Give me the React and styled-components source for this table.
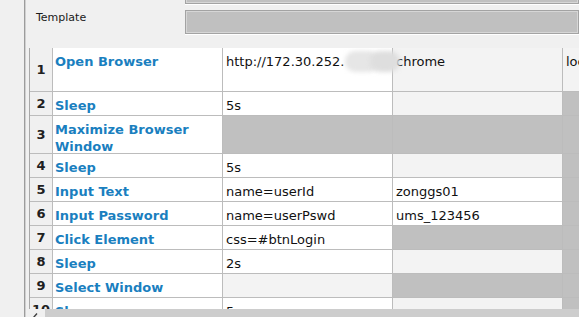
import React from 'react'
import styled, { createGlobalStyle } from 'styled-components'

const GlobalStyle = createGlobalStyle`
  html, body {
    margin: 0;
    padding: 0;
    overflow: hidden;
    background: #f0f0f0;
  }
  body {
    font-family: "DejaVu Sans", Tahoma, sans-serif;
  }
`

const WHITE = '#ffffff'
const LIGHT = '#f3f3f3'
const GREY = '#c0c0c0'

const rows = [
  { n: 1, h: 44, kw: 'Open Browser', cells: [['http://172.30.252.', WHITE], ['chrome', LIGHT], ['loc', LIGHT]] },
  { n: 2, h: 24, kw: 'Sleep', cells: [['5s', WHITE], ['', LIGHT], ['', GREY]] },
  { n: 3, h: 38, kw: 'Maximize Browser Window', cells: [['', GREY], ['', GREY], ['', GREY]] },
  { n: 4, h: 24, kw: 'Sleep', cells: [['5s', WHITE], ['', LIGHT], ['', GREY]] },
  { n: 5, h: 24, kw: 'Input Text', cells: [['name=userId', WHITE], ['zonggs01', WHITE], ['', GREY]] },
  { n: 6, h: 24, kw: 'Input Password', cells: [['name=userPswd', WHITE], ['ums_123456', WHITE], ['', GREY]] },
  { n: 7, h: 24, kw: 'Click Element', cells: [['css=#btnLogin', WHITE], ['', GREY], ['', GREY]] },
  { n: 8, h: 24, kw: 'Sleep', cells: [['2s', WHITE], ['', LIGHT], ['', GREY]] },
  { n: 9, h: 24, kw: 'Select Window', cells: [['', LIGHT], ['', GREY], ['', GREY]] },
  { n: 10, h: 24, kw: 'Sleep', cells: [['5s', WHITE], ['', LIGHT], ['', GREY]] },
]

const App = () => {
  return (
    <>
      <GlobalStyle />
      <Page>
        <LeftStrip />
        <Splitter />
        <Panel>
          <Settings>
            <SettingRow>
              <Label />
              <Field />
            </SettingRow>
            <SettingRow>
              <Label>Template</Label>
              <Field />
            </SettingRow>
          </Settings>

          <GridArea>
            <Grid>
              {rows.map(row => (
                <React.Fragment key={row.n}>
                  <NumCell h={row.h}>{row.n}</NumCell>
                  <KeywordCell h={row.h}>{row.kw}</KeywordCell>
                  {row.cells.map(([text, bg], i) => (
                    <Cell key={i} h={row.h} bg={bg}>{text}</Cell>
                  ))}
                </React.Fragment>
              ))}
            </Grid>
            {/* redaction smudge over the ip address */}
            <Blur left={319} w={34} tone="#e6e6e6" />
            <Blur left={344} w={30} tone="#dedede" />
          </GridArea>

          <HScroll>
            <ScrollButton>
              <svg width="7" height="9" viewBox="0 0 7 9">
                <path d="M5 0.5 L1.5 4.5 L5 8.5" fill="none" stroke="#404040" strokeWidth="1.4" />
              </svg>
            </ScrollButton>
            <ScrollThumb />
          </HScroll>
        </Panel>
      </Page>
    </>
  )
}

const Page = styled.div`
    width: 579px;
    height: 326px;
    display: flex;
    overflow: hidden;
    background: #f0f0f0;
`;

const LeftStrip = styled.div`
    width: 24px;
    flex-shrink: 0;
    background: #f0f0f0;
`;

const Splitter = styled.div`
    width: 2px;
    flex-shrink: 0;
    background: #9c9c9c;
    border-right: 1px solid #d0d0d0;
    box-sizing: border-box;
`;

const Panel = styled.div`
    flex: 1;
    min-width: 0;
    display: flex;
    flex-direction: column;
`;

const Settings = styled.div`
    height: 48px;
    flex-shrink: 0;
    display: flex;
    flex-direction: column;
    justify-content: flex-end;
    gap: 6px;
    padding: 0 0 14px 10px;
    box-sizing: border-box;
    overflow: hidden;
`;

const SettingRow = styled.div`
    display: flex;
    flex-shrink: 0;
`;

const Label = styled.div`
    width: 149px;
    flex-shrink: 0;
    font-size: 11px;
    line-height: 13px;
    padding-top: 1px;
    color: #1a1a1a;
`;

const Field = styled.div`
    flex: 1;
    height: 24px;
    box-sizing: border-box;
    background: #c0c0c0;
    border: 1px solid #a3a3a3;
    box-shadow: inset 0 0 0 1px #d6d6d6, 0 1px 0 #ffffff;
`;

const GridArea = styled.div`
    position: relative;
    flex: 1;
    min-height: 0;
    overflow: hidden;
    padding-left: 3px;
`;

const Grid = styled.div`
    display: grid;
    grid-template-columns: 23px repeat(4, 170px);
    width: max-content;
    border-top: 1px solid #bcbcbc;
    border-left: 1px solid #a8a8a8;
    margin-top: -1px;
`;

const BaseCell = styled.div`
    height: ${props => props.h}px;
    box-sizing: border-box;
    border-right: 1px solid #bcbcbc;
    border-bottom: 1px solid #bcbcbc;
    overflow: hidden;
`;

const NumCell = styled(BaseCell)`
    background: #f0f0f0;
    display: flex;
    align-items: center;
    justify-content: center;
    font-weight: bold;
    font-size: 13px;
    color: #202020;
`;

const KeywordCell = styled(BaseCell)`
    background: #ffffff;
    padding: 5px 2px 0;
    font-weight: bold;
    font-size: 13px;
    line-height: 17px;
    color: #1a7fbf;
`;

const Cell = styled(BaseCell)`
    background: ${props => props.bg};
    padding: 5px 3px 0;
    font-size: 13px;
    line-height: 17px;
    color: #111111;
    white-space: nowrap;
`;

const Blur = styled.div`
    position: absolute;
    top: 3px;
    left: ${props => props.left}px;
    width: ${props => props.w}px;
    height: 21px;
    border-radius: 10px;
    background: ${props => props.tone};
    filter: blur(2px);
`;

const HScroll = styled.div`
    height: 17px;
    flex-shrink: 0;
    display: flex;
    background: #f0f0f0;
`;

const ScrollButton = styled.div`
    width: 19px;
    display: flex;
    align-items: center;
    justify-content: center;
`;

const ScrollThumb = styled.div`
    flex: 1;
    background: #cdcdcd;
`;

export default App
